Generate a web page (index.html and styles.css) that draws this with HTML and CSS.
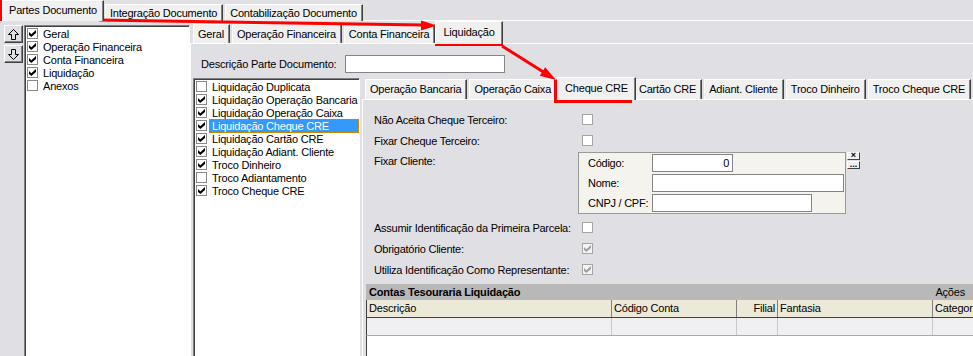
FILE: index.html
```html
<!DOCTYPE html>
<html lang="pt-BR">
<head>
    <meta charset="UTF-8">
    <title>Partes Documento</title>
    <link rel="stylesheet" href="styles.css">
</head>
<body>
<div class="app">
    <div class="tabs tabs-top">
        <div class="tab active">Partes Documento</div>
        <div class="tab">Integração Documento</div>
        <div class="tab">Contabilização Documento</div>
    </div>

    <div class="main">
        <div class="movers">
            <div class="mover">
                <svg width="11" height="11" viewBox="0 0 11 11"><polygon points="5.5,0.5 10.5,5.5 7.5,5.5 7.5,10.5 3.5,10.5 3.5,5.5 0.5,5.5"/></svg>
            </div>
            <div class="mover">
                <svg width="11" height="11" viewBox="0 0 11 11"><polygon points="5.5,10.5 10.5,5.5 7.5,5.5 7.5,0.5 3.5,0.5 3.5,5.5 0.5,5.5"/></svg>
            </div>
        </div>

        <ul class="checklist parts">
            <li class="item"><span class="cb on"></span>Geral</li>
            <li class="item"><span class="cb on"></span>Operação Financeira</li>
            <li class="item"><span class="cb on"></span>Conta Financeira</li>
            <li class="item"><span class="cb on"></span>Liquidação</li>
            <li class="item"><span class="cb"></span>Anexos</li>
        </ul>

        <div class="detail">
            <div class="tabs tabs-mid">
                <div class="tab">Geral</div>
                <div class="tab">Operação Financeira</div>
                <div class="tab">Conta Financeira</div>
                <div class="tab active">Liquidação</div>
            </div>

            <div class="page page-mid">
                <div class="desc-row">
                    <span class="desc-label">Descrição Parte Documento:</span>
                    <span class="field field-desc"></span>
                </div>

                <div class="split">
                    <ul class="checklist liq">
                        <li class="item"><span class="cb"></span>Liquidação Duplicata</li>
                        <li class="item"><span class="cb on"></span>Liquidação Operação Bancaria</li>
                        <li class="item"><span class="cb on"></span>Liquidação Operação Caixa</li>
                        <li class="item sel"><span class="cb on"></span><span class="sel-text">Liquidação Cheque CRE</span></li>
                        <li class="item"><span class="cb on"></span>Liquidação Cartão CRE</li>
                        <li class="item"><span class="cb on"></span>Liquidação Adiant. Cliente</li>
                        <li class="item"><span class="cb on"></span>Troco Dinheiro</li>
                        <li class="item"><span class="cb"></span>Troco Adiantamento</li>
                        <li class="item"><span class="cb on"></span>Troco Cheque CRE</li>
                    </ul>

                    <div class="inner">
                        <div class="tabs tabs-inner">
                            <div class="tab">Operação Bancaria</div>
                            <div class="tab">Operação Caixa</div>
                            <div class="tab active">Cheque CRE</div>
                            <div class="tab">Cartão CRE</div>
                            <div class="tab">Adiant. Cliente</div>
                            <div class="tab">Troco Dinheiro</div>
                            <div class="tab">Troco Cheque CRE</div>
                        </div>

                        <div class="page page-inner">
                            <div class="form">
                                <div class="frow"><span class="flabel">Não Aceita Cheque Terceiro:</span><span class="cb"></span></div>
                                <div class="frow"><span class="flabel">Fixar Cheque Terceiro:</span><span class="cb"></span></div>
                                <div class="frow frow-client">
                                    <span class="flabel">Fixar Cliente:</span>
                                    <div class="client-box">
                                        <div class="crow"><span class="clabel">Código:</span><span class="field field-code">0</span></div>
                                        <div class="crow"><span class="clabel">Nome:</span><span class="field field-name"></span></div>
                                        <div class="crow"><span class="clabel">CNPJ / CPF:</span><span class="field field-doc"></span></div>
                                    </div>
                                    <div class="mini-btns">
                                        <span class="mini">×</span>
                                        <span class="mini">...</span>
                                    </div>
                                </div>
                                <div class="frow"><span class="flabel">Assumir Identificação da Primeira Parcela:</span><span class="cb"></span></div>
                                <div class="frow"><span class="flabel">Obrigatório Cliente:</span><span class="cb on off"></span></div>
                                <div class="frow"><span class="flabel">Utiliza Identificação Como Representante:</span><span class="cb on off"></span></div>
                            </div>

                            <div class="grid">
                                <div class="grid-bar">
                                    <b>Contas Tesouraria Liquidação</b>
                                    <span class="grid-actions">Ações</span>
                                </div>
                                <div class="grid-head">
                                    <span>Descrição</span>
                                    <span>Código Conta</span>
                                    <span class="num">Filial</span>
                                    <span>Fantasia</span>
                                    <span>Categoria</span>
                                </div>
                                <div class="grid-row">
                                    <span></span><span></span><span></span><span></span><span></span>
                                </div>
                                <div class="grid-body"></div>
                            </div>
                        </div>
                    </div>
                </div>
            </div>
        </div>
    </div>

    <!-- marcações em vermelho -->
    <svg class="marks" width="973" height="356" viewBox="0 0 973 356">
        <rect x="1.5" y="1.5" width="98" height="18"/>
        <line x1="99" y1="20" x2="424" y2="25"/>
        <polygon points="437,25.5 421,20.5 421,30.5"/>
        <rect x="436.5" y="25.5" width="65" height="19"/>
        <line x1="502" y1="46" x2="545" y2="73"/>
        <polygon points="556,80 539.8,75.7 545.2,67.3"/>
        <rect x="555.5" y="81.5" width="75" height="20"/>
    </svg>
</div>
</body>
</html>
```

FILE: styles.css
```css
* {
    box-sizing: border-box;
}

body {
    margin: 0;
    background-color: #e0dfe3;
    font-family: "Liberation Sans", Arial, sans-serif;
    font-size: 11px;
    letter-spacing: -0.2px;
    color: #000;
}

.app {
    position: relative;
    width: 973px;
    height: 356px;
    overflow: hidden;
}

/* abas */
.tabs {
    display: flex;
    align-items: flex-end;
    white-space: nowrap;
}

.tab {
    flex-shrink: 0;
    background: #f0f0f0;
    border-top: 1px solid #fff;
    border-left: 1px solid #fff;
    border-right: 1px solid #404040;
    box-shadow: inset -1px 0 #808080;
    padding: 0 5px 0 4px;
    margin-right: 2px;
}

.tab.active {
    position: relative;
    z-index: 1;
    margin-left: -2px;
    margin-right: -2px;
    padding: 0 7px;
}

.tabs-top {
    height: 21px;
    padding-left: 2px;
    border-bottom: 1px solid #fff;
}

.tabs-top .tab {
    height: 17px;
    line-height: 16px;
    margin-bottom: -1px;
}

.tabs-top .tab.active {
    height: 21px;
    line-height: 18px;
    margin-left: 0;
    margin-right: 1px;
    padding: 0 6px;
}

.tabs-mid {
    height: 25px;
    padding-left: 3px;
}

.tabs-mid .tab,
.tabs-inner .tab {
    height: 19px;
    line-height: 18px;
}

.tabs-mid .tab.active,
.tabs-inner .tab.active {
    height: 23px;
    line-height: 21px;
    margin-bottom: -1px;
}

.tabs-inner {
    height: 22px;
    padding-left: 3px;
}

.tabs-inner .tab {
    height: 20px;
}

.page {
    border-top: 1px solid #fff;
    border-left: 1px solid #fff;
}

/* corpo principal */
.main {
    display: flex;
    height: 335px;
}

.movers {
    flex-shrink: 0;
    display: flex;
    flex-direction: column;
    gap: 2px;
    padding: 4px 1px 0 4px;
}

.mover {
    width: 19px;
    height: 18px;
    display: grid;
    place-items: center;
    border: 1px solid;
    border-color: #fff #404040 #404040 #fff;
    box-shadow: inset -1px -1px #808080;
}

.mover svg polygon {
    fill: none;
    stroke: #000;
    stroke-width: 1;
}

.checklist {
    flex-shrink: 0;
    list-style: none;
    margin: 0;
    background: #fff;
    border: 1px solid;
    border-color: #808080 #fff #fff #808080;
    box-shadow: inset 1px 1px #404040;
    padding: 1px 0 0 2px;
}

.parts {
    width: 166px;
    height: 340px;
    margin-top: 4px;
}

.item {
    display: flex;
    align-items: center;
    height: 13px;
    white-space: nowrap;
}

.cb {
    flex-shrink: 0;
    width: 11px;
    height: 11px;
    margin-right: 5px;
    display: grid;
    place-items: center;
    background: #fff;
    border: 1px solid #8a8a8a;
}

.cb.on::after {
    content: "";
    width: 7px;
    height: 7px;
    background: #000;
    clip-path: polygon(0 29%, 33% 62%, 100% 0, 100% 43%, 33% 100%, 0 71%);
}

.cb.off {
    background: #f4f4f4;
    border-color: #b0b0b0;
}

.cb.off::after {
    background: #a0a0a0;
}

.sel-text {
    flex: 1;
    height: 14px;
    line-height: 12px;
    margin-left: -3px;
    padding-left: 2px;
    background: #3399ff;
    color: #fff;
    border: 1px dotted #d08a00;
}

/* aba Liquidação */
.detail {
    flex: 1;
    min-width: 0;
    display: flex;
    flex-direction: column;
}

.page-mid {
    flex: 1;
    padding: 11px 0 0 2px;
}

.desc-row {
    display: flex;
    align-items: center;
    height: 18px;
    padding-left: 8px;
}

.desc-label {
    width: 144px;
}

.field {
    display: block;
    flex-shrink: 0;
    height: 18px;
    background: #fff;
    border: 1px solid #858585;
    padding: 0 3px;
    line-height: 16px;
}

.field-desc {
    width: 160px;
}

.split {
    display: flex;
    margin-top: 4px;
    flex: 1;
}

.liq {
    width: 167px;
    height: 280px;
    margin-top: 1px;
}

.inner {
    flex: 1;
    min-width: 0;
    margin-left: 2px;
    display: flex;
    flex-direction: column;
}

.page-inner {
    flex: 1;
}

/* formulário Cheque CRE */
.form {
    padding: 9px 0 0 11px;
    letter-spacing: -0.25px;
}

.frow {
    display: flex;
    align-items: center;
    height: 21px;
    white-space: nowrap;
}

.flabel {
    flex-shrink: 0;
    width: 204px;
}

.frow .cb {
    margin-left: 4px;
    border-color: #a5a5a5;
}

.frow-client {
    height: 66px;
    align-items: flex-start;
}

.frow-client .flabel {
    line-height: 21px;
}

.client-box {
    flex-shrink: 0;
    width: 268px;
    margin-top: 1px;
    padding: 1px 1px 1px 9px;
    background: #f4f3ee;
    border: 1px solid #9a9a9a;
    display: flex;
    flex-direction: column;
    gap: 2px;
}

.crow {
    display: flex;
    align-items: center;
    height: 18px;
}

.clabel {
    width: 64px;
}

.field-code {
    width: 81px;
    text-align: right;
}

.field-name {
    width: 192px;
}

.field-doc {
    width: 160px;
}

.mini-btns {
    display: flex;
    flex-direction: column;
    gap: 1px;
    margin: 1px 0 0 1px;
}

.mini {
    width: 13px;
    height: 8px;
    font-size: 9px;
    font-weight: bold;
    line-height: 5px;
    letter-spacing: 0;
    text-align: center;
    background: #f0f0f0;
    border: 1px solid;
    border-color: #fff #404040 #404040 #fff;
}

/* grade */
.grid {
    width: 607px;
    margin: 4px 0 0 3px;
}

.grid-bar {
    display: flex;
    align-items: center;
    height: 16px;
    padding: 0 8px 0 3px;
    background: #b8b8b8;
}

.grid-actions {
    margin-left: auto;
}

.grid-head,
.grid-row {
    display: grid;
    grid-template-columns: 245px 125px 41px 155px 100px;
    height: 18px;
    border-left: 1px solid #404040;
}

.grid-head {
    background: #ece9d8;
    border-bottom: 1px solid #404040;
    line-height: 17px;
}

.grid-head span {
    padding-left: 2px;
    border-right: 1px solid #808080;
}

.grid-head .num {
    text-align: right;
    padding-right: 2px;
}

.grid-row {
    background: #f0f0f3;
    border-bottom: 1px solid #a8a8a8;
}

.grid-row span {
    border-right: 1px solid #c8c8c8;
}

.grid-body {
    height: 40px;
    background: #fff;
    border-left: 1px solid #404040;
}

/* marcações */
.marks {
    position: absolute;
    left: 0;
    top: 0;
    pointer-events: none;
}

.marks rect,
.marks line {
    fill: none;
    stroke: #f00;
    stroke-width: 3;
}

.marks polygon {
    fill: #f00;
}
```
